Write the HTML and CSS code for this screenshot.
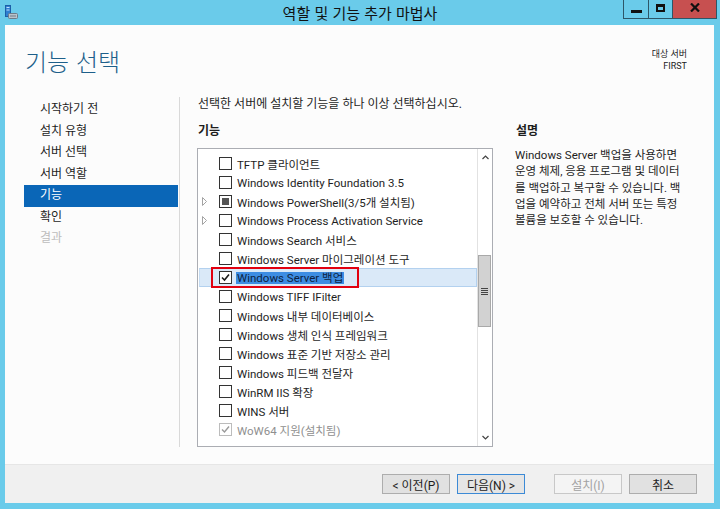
FILE: index.html
```html
<!DOCTYPE html>
<html lang="ko">
<head>
<meta charset="utf-8">
<title>역할 및 기능 추가 마법사</title>
<link rel="stylesheet" href="styles.css">
</head>
<body>
<div class="window">
  <div class="titlebar">
    <div class="appicon">
      <svg width="13" height="15" viewBox="0 0 13 15">
        <rect x="0.5" y="0.5" width="5" height="11" fill="#2f7fd0" stroke="#1b5fa8"/>
        <rect x="1.5" y="2" width="3" height="1" fill="#bfe0ff"/>
        <rect x="1.5" y="4.5" width="3" height="1" fill="#bfe0ff"/>
        <rect x="3.5" y="8.5" width="9" height="5" rx="1" fill="#b9c4cc" stroke="#6d7b86"/>
        <rect x="5" y="10.5" width="6" height="1" fill="#6d7b86"/>
      </svg>
    </div>
    <div class="title">역할 및 기능 추가 마법사</div>
    <div class="ctrls">
      <div class="cbtn cmin"><svg width="11" height="3"><rect width="11" height="3" fill="#111"/></svg></div>
      <div class="cbtn cmax"><svg width="9" height="8" viewBox="0 0 9 8"><rect x="1" y="1.5" width="7" height="5.5" fill="none" stroke="#111" stroke-width="2"/><rect x="0" y="0" width="9" height="3" fill="#111"/></svg></div>
      <div class="cbtn cclose"><svg width="10" height="9" viewBox="0 0 10 9"><path d="M1 0.5 L9 8.5 M9 0.5 L1 8.5" stroke="#111" stroke-width="2.2"/></svg></div>
    </div>
  </div>

  <div class="client">
    <div class="main">
      <div class="header">
        <h1 class="heading">기능 선택</h1>
        <div class="target">
          <div class="tline">대상 서버</div>
          <div class="tline">FIRST</div>
        </div>
      </div>

      <div class="body">
        <nav class="steps">
          <div class="step">시작하기 전</div>
          <div class="step">설치 유형</div>
          <div class="step">서버 선택</div>
          <div class="step">서버 역할</div>
          <div class="step active">기능</div>
          <div class="step">확인</div>
          <div class="step disabled">결과</div>
        </nav>

        <div class="content">
          <p class="instr">선택한 서버에 설치할 기능을 하나 이상 선택하십시오.</p>
          <div class="cols">
            <div class="features">
              <div class="label">기능</div>
              <div class="listbox">
                <div class="rows">
                  <div class="row"><span class="exp"></span><span class="cb"></span><span class="txt">TFTP 클라이언트</span></div>
                  <div class="row"><span class="exp"></span><span class="cb"></span><span class="txt">Windows Identity Foundation 3.5</span></div>
                  <div class="row"><span class="exp"><svg width="5" height="9" viewBox="0 0 5 9"><path d="M0.5 0.5 L4.5 4.5 L0.5 8.5 Z" fill="none" stroke="#a3a3a3"/></svg></span><span class="cb partial"><span class="fill"></span></span><span class="txt">Windows PowerShell(3/5개 설치됨)</span></div>
                  <div class="row"><span class="exp"><svg width="5" height="9" viewBox="0 0 5 9"><path d="M0.5 0.5 L4.5 4.5 L0.5 8.5 Z" fill="none" stroke="#a3a3a3"/></svg></span><span class="cb"></span><span class="txt">Windows Process Activation Service</span></div>
                  <div class="row"><span class="exp"></span><span class="cb"></span><span class="txt">Windows Search 서비스</span></div>
                  <div class="row"><span class="exp"></span><span class="cb"></span><span class="txt">Windows Server 마이그레이션 도구</span></div>
                  <div class="row selected"><span class="exp"></span><span class="cb"><svg width="11" height="11" viewBox="0 0 11 11"><path d="M2 5.5 L4.5 8 L9 2.5" fill="none" stroke="#1a1a1a" stroke-width="1.6"/></svg></span><span class="txt hl">Windows Server 백업</span><span class="mark"></span></div>
                  <div class="row"><span class="exp"></span><span class="cb"></span><span class="txt">Windows TIFF IFilter</span></div>
                  <div class="row"><span class="exp"></span><span class="cb"></span><span class="txt">Windows 내부 데이터베이스</span></div>
                  <div class="row"><span class="exp"></span><span class="cb"></span><span class="txt">Windows 생체 인식 프레임워크</span></div>
                  <div class="row"><span class="exp"></span><span class="cb"></span><span class="txt">Windows 표준 기반 저장소 관리</span></div>
                  <div class="row"><span class="exp"></span><span class="cb"></span><span class="txt">Windows 피드백 전달자</span></div>
                  <div class="row"><span class="exp"></span><span class="cb"></span><span class="txt">WinRM IIS 확장</span></div>
                  <div class="row"><span class="exp"></span><span class="cb"></span><span class="txt">WINS 서버</span></div>
                  <div class="row disabled"><span class="exp"></span><span class="cb"><svg width="11" height="11" viewBox="0 0 11 11"><path d="M2 5.5 L4.5 8 L9 2.5" fill="none" stroke="#9a9a9a" stroke-width="1.4"/></svg></span><span class="txt">WoW64 지원(설치됨)</span></div>
                </div>
                <div class="sb">
                  <div class="sbbtn"><svg width="7" height="5" viewBox="0 0 7 5"><path d="M0.5 4 L3.5 1 L6.5 4" fill="none" stroke="#444" stroke-width="1.2"/></svg></div>
                  <div class="track">
                    <div class="thumb"><svg width="7" height="7" viewBox="0 0 7 7"><rect y="0" width="7" height="1" fill="#444"/><rect y="2" width="7" height="1" fill="#444"/><rect y="4" width="7" height="1" fill="#444"/><rect y="6" width="7" height="1" fill="#444"/></svg></div>
                  </div>
                  <div class="sbbtn"><svg width="7" height="5" viewBox="0 0 7 5"><path d="M0.5 1 L3.5 4 L6.5 1" fill="none" stroke="#444" stroke-width="1.2"/></svg></div>
                </div>
              </div>
            </div>
            <div class="desc">
              <div class="label">설명</div>
              <p class="desctext">Windows Server 백업을 사용하면<br>운영 체제, 응용 프로그램 및 데이터<br>를 백업하고 복구할 수 있습니다. 백<br>업을 예약하고 전체 서버 또는 특정<br>볼륨을 보호할 수 있습니다.</p>
            </div>
          </div>
        </div>
      </div>
    </div>

    <div class="footer">
      <div class="btn">&lt; 이전(P)</div>
      <div class="btn primary">다음(N) &gt;</div>
      <div class="btn disabled spaced">설치(I)</div>
      <div class="btn">취소</div>
    </div>
  </div>
</div>
</body>
</html>
```
FILE: styles.css
```css
* { box-sizing: border-box; }

html, body {
  margin: 0;
  padding: 0;
}

body {
  width: 720px;
  height: 509px;
  overflow: hidden;
  background: #6acbea;
  font-family: "Roboto", "Noto Sans CJK KR", sans-serif;
  font-size: 12px;
  color: #1e1e1e;
}

.window {
  height: 509px;
  display: flex;
  flex-direction: column;
}

/* title bar */
.titlebar {
  height: 25px;
  display: grid;
  grid-template-columns: 1fr auto 1fr;
  align-items: start;
}
.appicon {
  padding: 5px 0 0 5px;
  line-height: 0;
}
.title {
  font-family: "Noto Sans CJK KR", sans-serif;
  font-size: 15px;
  line-height: 25px;
  color: #111;
}
.ctrls {
  justify-self: end;
  display: flex;
  margin-right: 3px;
}
.cbtn {
  height: 19px;
  display: flex;
  align-items: center;
  justify-content: center;
  border: 1px solid #2d5668;
  border-top: none;
}
.cmin { width: 26px; align-items: flex-end; padding-bottom: 5px; }
.cmax { width: 24px; border-left: none; padding-bottom: 3px; }
.cclose { width: 44px; border-left: none; background: #c75050; padding-bottom: 3px; }

/* client */
.client {
  flex: 1;
  margin: 0 6px 6px 5px;
  background: #fcfcfc;
  display: flex;
  flex-direction: column;
}
.main {
  flex: 1;
  display: flex;
  flex-direction: column;
  min-height: 0;
}

.header {
  height: 70px;
  display: flex;
  justify-content: space-between;
  align-items: flex-start;
  padding: 21px 27px 0 20px;
}
.heading {
  margin: 0;
  font-family: "Noto Sans CJK KR", sans-serif;
  font-size: 24px;
  line-height: 30px;
  font-weight: 300;
  color: #1d5f8a;
}
.target {
  text-align: right;
  font-size: 9px;
  padding-top: 2px;
  color: #222;
}
.tline {
  height: 12px;
  line-height: 12px;
  overflow: hidden;
}

.body {
  flex: 1;
  display: flex;
  min-height: 0;
}

.steps {
  width: 173px;
  padding: 4px 0 0 19px;
}
.step {
  height: 21.5px;
  line-height: 21.5px;
  padding-left: 16px;
  color: #1e1e1e;
}
.step.active {
  background: #0a66b7;
  color: #fff;
}
.step.disabled {
  color: #bdbdbd;
}

.content {
  flex: 1;
  margin: 2px 0 17px 1px;
  border-left: 1px solid #d9d9d9;
  padding-left: 18px;
  display: flex;
  flex-direction: column;
}
.instr {
  margin: 0;
  padding-top: 1px;
  line-height: 12px;
}
.cols {
  display: flex;
  gap: 23px;
  margin-top: 13px;
}
.label {
  font-weight: bold;
  line-height: 16px;
}

.features {
  width: 296px;
  margin-left: -1px;
  display: flex;
  flex-direction: column;
}
.features .label { padding-left: 1px; }

.listbox {
  margin-top: 9px;
  height: 299px;
  border: 1px solid #abadb3;
  background: #fff;
  display: flex;
}
.rows {
  flex: 1;
  overflow: hidden;
  padding-top: 5px;
  font-size: 11.5px;
}
.row {
  position: relative;
  height: 19px;
  margin-left: 1px;
  display: flex;
  align-items: center;
  white-space: nowrap;
  color: #1e1e1e;
}
.row.selected {
  background: #dae9f8;
  border: 1px solid #b3d1ef;
  border-left-color: #c5dcf3;
}
.exp {
  width: 20px;
  padding-left: 3px;
  display: flex;
  align-items: center;
  line-height: 0;
}
.cb {
  width: 13px;
  height: 13px;
  border: 1px solid #333;
  background: #fff;
  margin-right: 4px;
  display: flex;
  align-items: center;
  justify-content: center;
  flex: none;
}
.selected .exp { width: 19px; }
.cb.partial .fill {
  width: 7px;
  height: 7px;
  background: #555;
}
.txt { padding-left: 1px; }
.hl {
  background: #3d8de3;
  color: #0d1f40;
  line-height: 12px;
  padding: 0 1px;
}
.row.disabled { color: #8f8f8f; }
.row.disabled .cb { border-color: #bcbcbc; }
.mark {
  position: absolute;
  left: 11px;
  top: -2px;
  width: 148px;
  height: 21px;
  border: 2px solid #e2000f;
}

/* scrollbar */
.sb {
  width: 15px;
  border-left: 1px solid #e2e2e2;
  display: flex;
  flex-direction: column;
  background: #fff;
}
.sbbtn {
  height: 17px;
  display: flex;
  align-items: center;
  justify-content: center;
  line-height: 0;
}
.track {
  flex: 1;
}
.thumb {
  margin-top: 89px;
  height: 72px;
  width: 13px;
  background: #d2d2d2;
  border: 1px solid #a9a9a9;
  display: flex;
  align-items: center;
  justify-content: center;
  line-height: 0;
}

.desc {
  width: 175px;
}
.desctext {
  margin: 8px 0 0 -1px;
  line-height: 16.3px;
  font-size: 11.5px;
  color: #1e1e1e;
}

/* footer */
.footer {
  height: 39px;
  background: #f0f0f0;
  border-top: 1px solid #e6e6e6;
  display: flex;
  justify-content: flex-end;
  gap: 7px;
  padding: 9px 17px 0 0;
}
.btn {
  width: 68px;
  height: 20px;
  border: 1px solid #adadad;
  background: #e1e1e1;
  display: flex;
  align-items: center;
  justify-content: center;
  font-size: 12px;
  color: #1e1e1e;
}
.btn.primary {
  border-color: #3c8ad6;
  background: #e5e5e5;
}
.btn.disabled {
  border-color: #c8c8c8;
  background: #f4f4f4;
  color: #a2a2a2;
}
.btn.spaced {
  margin-left: 22px;
}
```
